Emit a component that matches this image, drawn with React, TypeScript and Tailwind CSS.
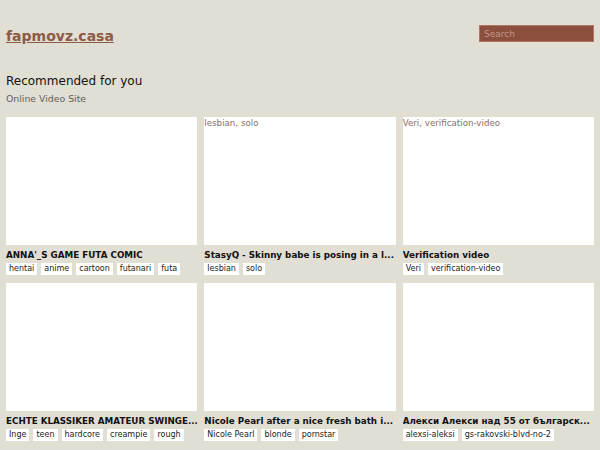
import React from "react";

type Item = { title: string; tags: string[]; alt?: string };

const items: Item[] = [
  { title: "ANNA'_S GAME FUTA COMIC", tags: ["hentai", "anime", "cartoon", "futanari", "futa"] },
  { title: "StasyQ - Skinny babe is posing in a l...", tags: ["lesbian", "solo"], alt: "lesbian, solo" },
  { title: "Verification video", tags: ["Veri", "verification-video"], alt: "Veri, verification-video" },
  { title: "ECHTE KLASSIKER AMATEUR SWINGE...", tags: ["Inge", "teen", "hardcore", "creampie", "rough"] },
  { title: "Nicole Pearl after a nice fresh bath i...", tags: ["Nicole Pearl", "blonde", "pornstar"] },
  { title: "Алекси Алекси над 55 от българск...", tags: ["alexsi-aleksi", "gs-rakovski-blvd-no-2"] },
];

export default function App() {
  return (
    <div
      className="w-[600px] h-[450px] overflow-hidden bg-[#e1ded4] text-[#111]"
      style={{ fontFamily: '"DejaVu Sans", "Noto Sans", sans-serif' }}
    >
      <header className="flex justify-between items-start px-[6px]">
        <a
          href="#"
          className="mt-[29px] block h-[14px] leading-[14px] text-[14px] font-bold text-[#8c5a47] underline"
        >
          fapmovz.casa
        </a>
        <div className="mt-[25px] w-[115px] h-[17px] bg-[#8b4f3e] border border-[#b07566] flex items-center px-[4px]">
          <span className="text-[9px] leading-[10px] text-[#c4978a]">Search</span>
        </div>
      </header>
      <h1 className="mt-[32px] px-[6px] h-[12px] leading-[12px] text-[12px] font-normal text-[#111]">
        Recommended for you
      </h1>
      <p className="mt-[6.8px] px-[6px] h-[10px] leading-[10px] text-[9.33px] font-normal text-[#5e5e5e]">
        Online Video Site
      </p>
      <div className="mt-[13.2px] px-[6px] grid grid-cols-3 gap-x-[7px] gap-y-[8px]">
        {items.map((it, i) => (
          <div key={i} className="min-w-0">
            <div className="aspect-[3/2] bg-white">
              {it.alt && (
                <div className="pt-[1px] text-[8.7px] leading-[10px] text-[#8a6e66]">{it.alt}</div>
              )}
            </div>
            <div className="mt-[5px] h-[10px] leading-[10px] text-[8.75px] font-bold whitespace-nowrap overflow-hidden">
              {it.title}
            </div>
            <div className="mt-[3.5px] flex gap-[4px] h-[12px]">
              {it.tags.map((t) => (
                <span
                  key={t}
                  className="bg-white px-[3px] h-[12px] leading-[12px] text-[8px] text-[#222] whitespace-nowrap"
                >
                  {t}
                </span>
              ))}
            </div>
          </div>
        ))}
      </div>
    </div>
  );
}
